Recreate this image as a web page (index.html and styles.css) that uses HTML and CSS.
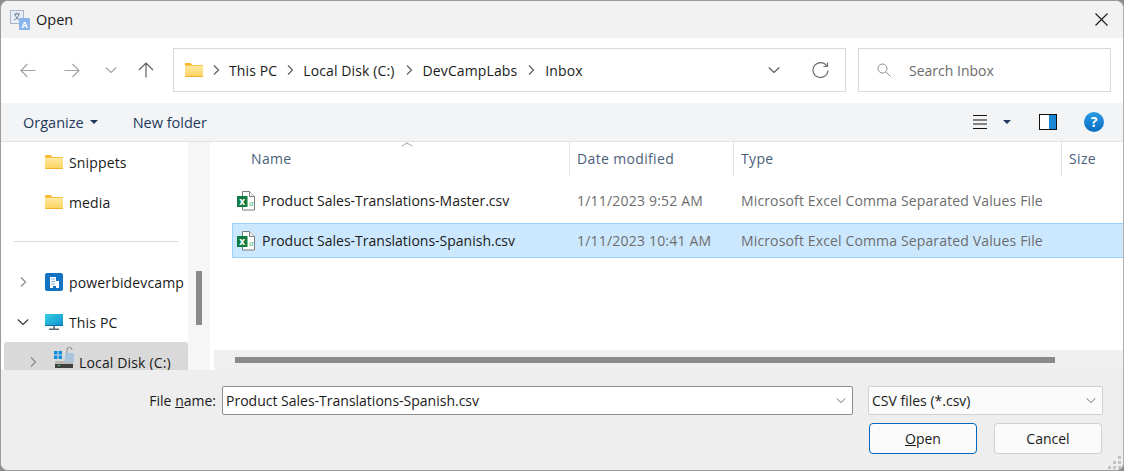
FILE: index.html
```html
<!DOCTYPE html>
<html lang="en">
<head>
    <meta charset="UTF-8">
    <title>Open</title>
    <link rel="stylesheet" href="styles.css">
</head>
<body>
<svg class="defs" width="0" height="0">
    <defs>
        <linearGradient id="folderFill" x1="0" y1="0" x2="0" y2="1">
            <stop offset="0" stop-color="#ffe9a0"/>
            <stop offset="1" stop-color="#fdd35f"/>
        </linearGradient>
        <linearGradient id="screenFill" x1="0" y1="0" x2="1" y2="1">
            <stop offset="0" stop-color="#35d0e0"/>
            <stop offset="1" stop-color="#0f8fd0"/>
        </linearGradient>
        <symbol id="folder" viewBox="0 0 18 14">
            <path d="M0 1.200C0 .5.5 0 1.200 0h4.300l2 2H18v11H0z" fill="#f8b62d"/>
            <path d="M0 2.800h18v10.200c0 .6-.4 1-1 1H1c-.6 0-1-.4-1-1z" fill="url(#folderFill)"/>
            <path d="M0 13h18v.2c0 .5-.4.8-.8.8H.8c-.4 0-.8-.3-.8-.8z" fill="#f4b02a"/>
        </symbol>
        <symbol id="excel" viewBox="0 0 18 20">
            <path d="M5.500.5h7l5 5v13.500h-12z" fill="#fff" stroke="#7d7d7d"/>
            <path d="M12.500.5v5h5" fill="#f2f2f2" stroke="#7d7d7d"/>
            <text class="xl-a" x="14.300" y="14.500">a</text>
            <rect x="0" y="5" width="10.500" height="11" fill="#107c41"/>
            <text class="xl-x" x="5.200" y="13.800">x</text>
        </symbol>
        <symbol id="chev-right" viewBox="0 0 8 12">
            <path d="M2 1.500L6.500 6 2 10.500" fill="none" stroke="currentColor" stroke-width="1.200"/>
        </symbol>
        <symbol id="chev-down" viewBox="0 0 12 8">
            <path d="M.8 1.500L6 6.500l5.200-5" fill="none" stroke="currentColor" stroke-width="1.100"/>
        </symbol>
    </defs>
</svg>

<div class="window">
    <header class="titlebar">
        <svg class="app-icon" width="20" height="20" viewBox="0 0 20 20">
            <rect x=".5" y=".5" width="13" height="13" fill="#e8eef7" stroke="#a9b6c9"/>
            <path d="M4 4h6M7 2.500V4M5 4c.5 3 2.500 5 4.500 6M9 4c-.5 3-2.500 5-5 6" fill="none" stroke="#6b7a90" stroke-width=".9"/>
            <rect x="9" y="8" width="11" height="12" rx="1" fill="#8ab4ec"/>
            <text class="app-a" x="14.500" y="18">A</text>
        </svg>
        <span class="title">Open</span>
        <svg class="close" width="13" height="13" viewBox="0 0 13 13">
            <path d="M.5.5l12 12M12.500.5l-12 12" stroke="#1a1a1a" stroke-width="1.100"/>
        </svg>
    </header>

    <nav class="navbar">
        <div class="nav-buttons">
            <svg width="16" height="15" viewBox="0 0 16 15"><path d="M15.500 7.500H1M7.500 1L1 7.500 7.500 14" fill="none" stroke="#a3a3a3" stroke-width="1.200"/></svg>
            <svg width="16" height="15" viewBox="0 0 16 15"><path d="M.5 7.500H15M8.500 1L15 7.500 8.500 14" fill="none" stroke="#a3a3a3" stroke-width="1.200"/></svg>
            <svg class="nav-recent" width="12" height="8"><use href="#chev-down"/></svg>
            <svg width="16" height="16" viewBox="0 0 16 16"><path d="M8 15.500V1M1 8l7-7 7 7" fill="none" stroke="#5f5f5f" stroke-width="1.200"/></svg>
        </div>
        <div class="address">
            <svg class="addr-folder" width="18" height="14"><use href="#folder"/></svg>
            <svg class="crumb-sep" width="8" height="12"><use href="#chev-right"/></svg>
            <span>This PC</span>
            <svg class="crumb-sep" width="8" height="12"><use href="#chev-right"/></svg>
            <span>Local Disk (C:)</span>
            <svg class="crumb-sep wide" width="8" height="12"><use href="#chev-right"/></svg>
            <span>DevCampLabs</span>
            <svg class="crumb-sep wide" width="8" height="12"><use href="#chev-right"/></svg>
            <span>Inbox</span>
            <svg class="addr-drop" width="12" height="8"><use href="#chev-down"/></svg>
            <svg class="addr-refresh" width="17" height="17" viewBox="0 0 17 17">
                <path d="M14.700 3.800A7.500 7.500 0 1 0 16 8.500" fill="none" stroke="#6e6e6e" stroke-width="1.200"/>
                <path d="M15.500 .5v4h-4" fill="none" stroke="#6e6e6e" stroke-width="1.200"/>
            </svg>
        </div>
        <div class="search">
            <svg width="14" height="14" viewBox="0 0 14 14">
                <circle cx="5.500" cy="5.500" r="4.500" fill="none" stroke="#8d8d8d"/>
                <path d="M9 9l4.500 4.500" stroke="#8d8d8d"/>
            </svg>
            <span>Search Inbox</span>
        </div>
    </nav>

    <div class="toolbar">
        <span class="tool-item organize">Organize</span>
        <span class="caret"></span>
        <span class="tool-item new-folder">New folder</span>
        <svg class="view-icon" width="15" height="14" viewBox="0 0 15 14">
            <path d="M0 .5h14M0 5h14M0 9h14M0 13.500h14" stroke="#111" stroke-width="1"/>
        </svg>
        <span class="caret view-caret"></span>
        <svg class="pane-icon" width="18" height="16" viewBox="0 0 18 16">
            <rect x=".5" y=".5" width="17" height="15" fill="#fff" stroke="#111"/>
            <rect x="10" y="1" width="7" height="14" fill="#1a86d6"/>
        </svg>
        <span class="help">?</span>
    </div>

    <main class="main">
        <aside class="tree">
            <div class="tree-row indent-folder">
                <svg width="18" height="14"><use href="#folder"/></svg>
                <span>Snippets</span>
            </div>
            <div class="tree-row indent-folder">
                <svg width="18" height="14"><use href="#folder"/></svg>
                <span>media</span>
            </div>
            <div class="tree-sep"></div>
            <div class="tree-row">
                <svg class="twist" width="8" height="12"><use href="#chev-right"/></svg>
                <svg width="18" height="18" viewBox="0 0 18 18">
                    <rect width="18" height="18" rx="2" fill="#1272c4"/>
                    <path d="M5 15V4h6v4h3v7h-3v-2H8v2z" fill="#fff"/>
                    <path d="M6.500 5.500h1v1h-1zM8.500 5.500h1v1h-1zM6.500 8h1v1h-1zM8.500 8h1v1h-1zM6.500 10.500h1v1h-1zM8.500 10.500h1v1h-1z" fill="#1272c4"/>
                </svg>
                <span>powerbidevcamp</span>
            </div>
            <div class="tree-row">
                <svg class="twist open" width="12" height="8"><use href="#chev-down"/></svg>
                <svg width="18" height="16" viewBox="0 0 18 16">
                    <rect width="18" height="12" fill="url(#screenFill)"/>
                    <rect y="11" width="18" height="1" fill="#0b6f9c"/>
                    <rect x="8" y="12" width="2" height="3" fill="#7c8a94"/>
                    <rect x="4" y="14.500" width="10" height="1.500" fill="#5b6770"/>
                </svg>
                <span>This PC</span>
            </div>
            <div class="tree-row selected">
                <svg class="twist" width="8" height="12"><use href="#chev-right"/></svg>
                <svg class="disk-icon" width="21" height="21" viewBox="0 0 21 21">
                    <path d="M0 4h3.500v3.500H0zM4.500 4H8v3.500H4.500zM0 8.500h3.500V12H0zM4.500 8.500H8V12H4.500z" fill="#0a8fe0"/>
                    <rect x="1" y="14" width="18" height="3" fill="#b8b8b8"/>
                    <rect x="1" y="17" width="18" height="4" fill="#3f3f3f"/>
                    <rect x="4" y="18" width="2" height="1" fill="#3bdc6a"/>
                    <rect x="11" y="6" width="9" height="9" rx="1" fill="#a8c6de"/>
                    <path d="M13 6V3a2.500 2.500 0 0 1 5 0" fill="none" stroke="#9a9a9a" stroke-width="1.200"/>
                </svg>
                <span>Local Disk (C:)</span>
            </div>
        </aside>
        <div class="tree-scroll"><div class="tree-thumb"></div></div>

        <section class="files">
            <div class="file-scroll-area">
                <div class="columns">
                    <div class="col col-name">Name<span class="sort-caret"></span></div>
                    <div class="col col-date">Date modified</div>
                    <div class="col col-type">Type</div>
                    <div class="col col-size">Size</div>
                </div>
                <div class="file-row">
                    <div class="cell cell-name">
                        <svg width="18" height="20"><use href="#excel"/></svg>
                        <span>Product Sales-Translations-Master.csv</span>
                    </div>
                    <div class="cell cell-date">1/11/2023 9:52 AM</div>
                    <div class="cell cell-type">Microsoft Excel Comma Separated Values File</div>
                </div>
                <div class="file-row selected">
                    <div class="cell cell-name">
                        <svg width="18" height="20"><use href="#excel"/></svg>
                        <span>Product Sales-Translations-Spanish.csv</span>
                    </div>
                    <div class="cell cell-date">1/11/2023 10:41 AM</div>
                    <div class="cell cell-type">Microsoft Excel Comma Separated Values File</div>
                </div>
            </div>
            <div class="hscroll"><div class="hthumb"></div></div>
        </section>
    </main>

    <footer class="bottom">
        <div class="name-row">
            <label class="name-label">File <u>n</u>ame:</label>
            <div class="combo name-combo">
                <span>Product Sales-Translations-Spanish.csv</span>
                <svg width="10" height="7"><use href="#chev-down"/></svg>
            </div>
            <div class="combo type-combo">
                <span>CSV files (*.csv)</span>
                <svg width="10" height="7"><use href="#chev-down"/></svg>
            </div>
        </div>
        <div class="button-row">
            <button class="btn primary"><u>O</u>pen</button>
            <button class="btn">Cancel</button>
        </div>
        <svg class="grip" width="14" height="14" viewBox="0 0 14 14">
            <path d="M10 1h3v3h-3zM5 6h3v3H5zM10 6h3v3h-3zM0 11h3v3H0zM5 11h3v3H5zM10 11h3v3h-3z" fill="#c4c4c4"/>
        </svg>
    </footer>
</div>
</body>
</html>
```

FILE: styles.css
```css
* {
    box-sizing: border-box;
}
html, body {
    height: 100%;
}
body {
    margin: 0;
    background-color: #8c8c8c;
    font-family: "Open Sans", "Noto Sans", sans-serif;
    font-size: 14px;
    color: #1a1a1a;
    overflow: hidden;
}
svg {
    display: block;
    flex: none;
}
.defs {
    position: absolute;
}
.window {
    width: 1124px;
    height: 471px;
    display: flex;
    flex-direction: column;
    border: 1px solid #9c9c9c;
    border-right-color: #b0b0b0;
    border-radius: 8px;
    overflow: hidden;
    background-color: #eeeeee;
}

/* title bar */
.titlebar {
    height: 37px;
    flex: none;
    display: flex;
    align-items: center;
    padding: 0 15px 0 9px;
    background-color: #f2f2f2;
}
.app-a {
    font-size: 9px;
    font-weight: 700;
    fill: #fff;
    text-anchor: middle;
}
.title {
    margin-left: 6px;
    font-size: 14.5px;
}
.close {
    margin-left: auto;
}

/* nav row */
.navbar {
    height: 65px;
    flex: none;
    display: flex;
    align-items: flex-start;
    padding-top: 10px;
    background-color: #fff;
}
.nav-buttons {
    width: 172px;
    height: 44px;
    flex: none;
    display: flex;
    align-items: center;
    padding-left: 19px;
}
.nav-buttons svg:nth-child(2) {
    margin-left: 28px;
}
.nav-recent {
    margin-left: 25px;
    color: #a3a3a3;
}
.nav-buttons svg:nth-child(4) {
    margin-left: 21px;
}
.address {
    width: 673px;
    height: 44px;
    flex: none;
    display: flex;
    align-items: center;
    padding-left: 11px;
    border: 1px solid #d9d9d9;
    letter-spacing: .12px;
}
.crumb-sep {
    margin: 0 9px;
    color: #5f5f5f;
}
.crumb-sep.wide {
    margin: 0 10px;
}
.addr-drop {
    margin-left: auto;
    color: #555;
}
.addr-refresh {
    margin: 0 16px 0 32px;
}
.search {
    width: 253px;
    height: 44px;
    flex: none;
    margin-left: 12px;
    display: flex;
    align-items: center;
    padding-left: 18px;
    border: 1px solid #d9d9d9;
    color: #6b6b6b;
}
.search span {
    margin-left: 18px;
}

/* command bar */
.toolbar {
    height: 39px;
    flex: none;
    display: flex;
    align-items: center;
    padding-left: 22px;
    background-color: #f3f4f6;
    border-bottom: 1px solid #e3e3e3;
}
.tool-item {
    color: #1e395b;
    font-size: 14.5px;
}
.caret {
    width: 0;
    height: 0;
    margin-left: 6px;
    border-left: 4px solid transparent;
    border-right: 4px solid transparent;
    border-top: 4px solid #1e395b;
}
.new-folder {
    margin-left: 35px;
}
.view-icon {
    margin-left: auto;
}
.view-caret {
    margin-left: 15px;
}
.pane-icon {
    margin-left: 28px;
}
.help {
    width: 20px;
    height: 20px;
    margin: 0 19px 0 27px;
    border-radius: 50%;
    background: linear-gradient(#2a9be6, #0a6cc0);
    color: #fff;
    font-size: 14px;
    font-weight: 700;
    line-height: 20px;
    text-align: center;
}

/* tree */
.main {
    height: 228px;
    flex: none;
    display: flex;
    background-color: #fff;
    overflow: hidden;
}
.tree {
    width: 187px;
    flex: none;
    padding-left: 3px;
    letter-spacing: .15px;
}
.tree-row {
    height: 40px;
    display: flex;
    align-items: center;
    padding-left: 41px;
    white-space: nowrap;
}
.tree-row span {
    margin-left: 6px;
}
.tree-sep {
    height: 1px;
    margin: 19px 10px 20px 10px;
    background-color: #d9d9d9;
}
.twist {
    margin-left: -26px;
    margin-right: 18px;
    color: #8a8a8a;
}
.twist.open {
    margin-left: -28px;
    margin-right: 16px;
    color: #333;
}
.tree-row.selected {
    padding-left: 54px;
    border-radius: 3px 3px 0 0;
    background-color: #d9d9d9;
}
.tree-row.selected .twist {
    margin-right: 17px;
    margin-left: -29px;
}
.tree-row.selected span {
    margin-left: 4px;
}
.disk-icon {
    margin-bottom: 9px;
}
.tree-scroll {
    width: 23px;
    flex: none;
    padding: 129px 8px 0 8px;
    background-color: #f6f6f6;
    border-right: 1px solid #fff;
}
.tree-thumb {
    height: 54px;
    background-color: #8a8a8a;
}

/* file list */
.files {
    flex: 1;
    min-width: 0;
    display: flex;
    flex-direction: column;
}
.file-scroll-area {
    flex: 1;
    min-height: 0;
}
.columns {
    height: 34px;
    margin-bottom: 7px;
    display: flex;
    color: #4c607a;
    letter-spacing: .35px;
}
.col {
    height: 34px;
    display: flex;
    align-items: center;
    padding: 0 0 2px 7px;
    border-right: 1px solid #e5e5e5;
}
.col-name {
    position: relative;
    width: 359px;
    padding-left: 40px;
}
.col-date {
    width: 164px;
}
.col-type {
    width: 328px;
}
.col-size {
    border-right: none;
}
.sort-caret {
    position: absolute;
    left: 192px;
    top: 0;
    width: 8px;
    height: 8px;
    border-left: 1px solid #a0a0a0;
    border-top: 1px solid #a0a0a0;
    transform: scale(1, .6) rotate(45deg);
}
.file-row {
    height: 35px;
    margin: 0 0 5px 21px;
    display: flex;
    align-items: center;
    border: 1px solid transparent;
    border-right: none;
    white-space: nowrap;
}
.file-row.selected {
    background-color: #cce8ff;
    border-color: #99d1ff;
}
.cell {
    color: #6d6d6d;
}
.cell-name {
    width: 337px;
    flex: none;
    display: flex;
    align-items: center;
    padding-left: 4px;
    color: #1a1a1a;
}
.cell-name span {
    margin-left: 7px;
}
.cell-date {
    width: 164px;
    flex: none;
    padding-left: 7px;
    letter-spacing: .2px;
}
.cell-type {
    padding-left: 7px;
    letter-spacing: .14px;
}
.xl-a {
    font-size: 8px;
    fill: #3fae78;
    text-anchor: middle;
    font-style: italic;
}
.xl-x {
    font-size: 10px;
    font-weight: 700;
    fill: #fff;
    text-anchor: middle;
}
.hscroll {
    height: 20px;
    flex: none;
    margin-left: 3px;
    padding: 7px 0 0 21px;
    background-color: #f0f0f0;
}
.hthumb {
    width: 820px;
    height: 6px;
    background-color: #8a8a8a;
}

/* footer */
.bottom {
    position: relative;
    flex: 1;
    padding-top: 16px;
    background-color: #eeeeee;
}
.name-row {
    display: flex;
    align-items: center;
}
.name-label {
    width: 215px;
    flex: none;
    text-align: right;
}
.combo {
    height: 29px;
    flex: none;
    display: flex;
    align-items: center;
    justify-content: space-between;
    padding: 0 6px 0 3px;
    background-color: #fff;
    border: 1px solid #8d8d8d;
    border-radius: 2px;
    color: #1a1a1a;
}
.combo svg {
    color: #666;
}
.name-combo {
    width: 631px;
    margin-left: 6px;
}
.type-combo {
    width: 235px;
    margin-left: 15px;
    background-color: #fbfbfb;
    border-color: #d0d0d0;
}
.button-row {
    display: flex;
    gap: 17px;
    margin: 8px 0 0 868px;
}
.btn {
    width: 108px;
    height: 31px;
    padding: 0;
    background-color: #fbfbfb;
    border: 1px solid #d0d0d0;
    border-radius: 4px;
    font-family: inherit;
    font-size: 14px;
    color: #1a1a1a;
}
.btn.primary {
    border-color: #0067c0;
}
.grip {
    position: absolute;
    right: 1px;
    bottom: 1px;
}
```
